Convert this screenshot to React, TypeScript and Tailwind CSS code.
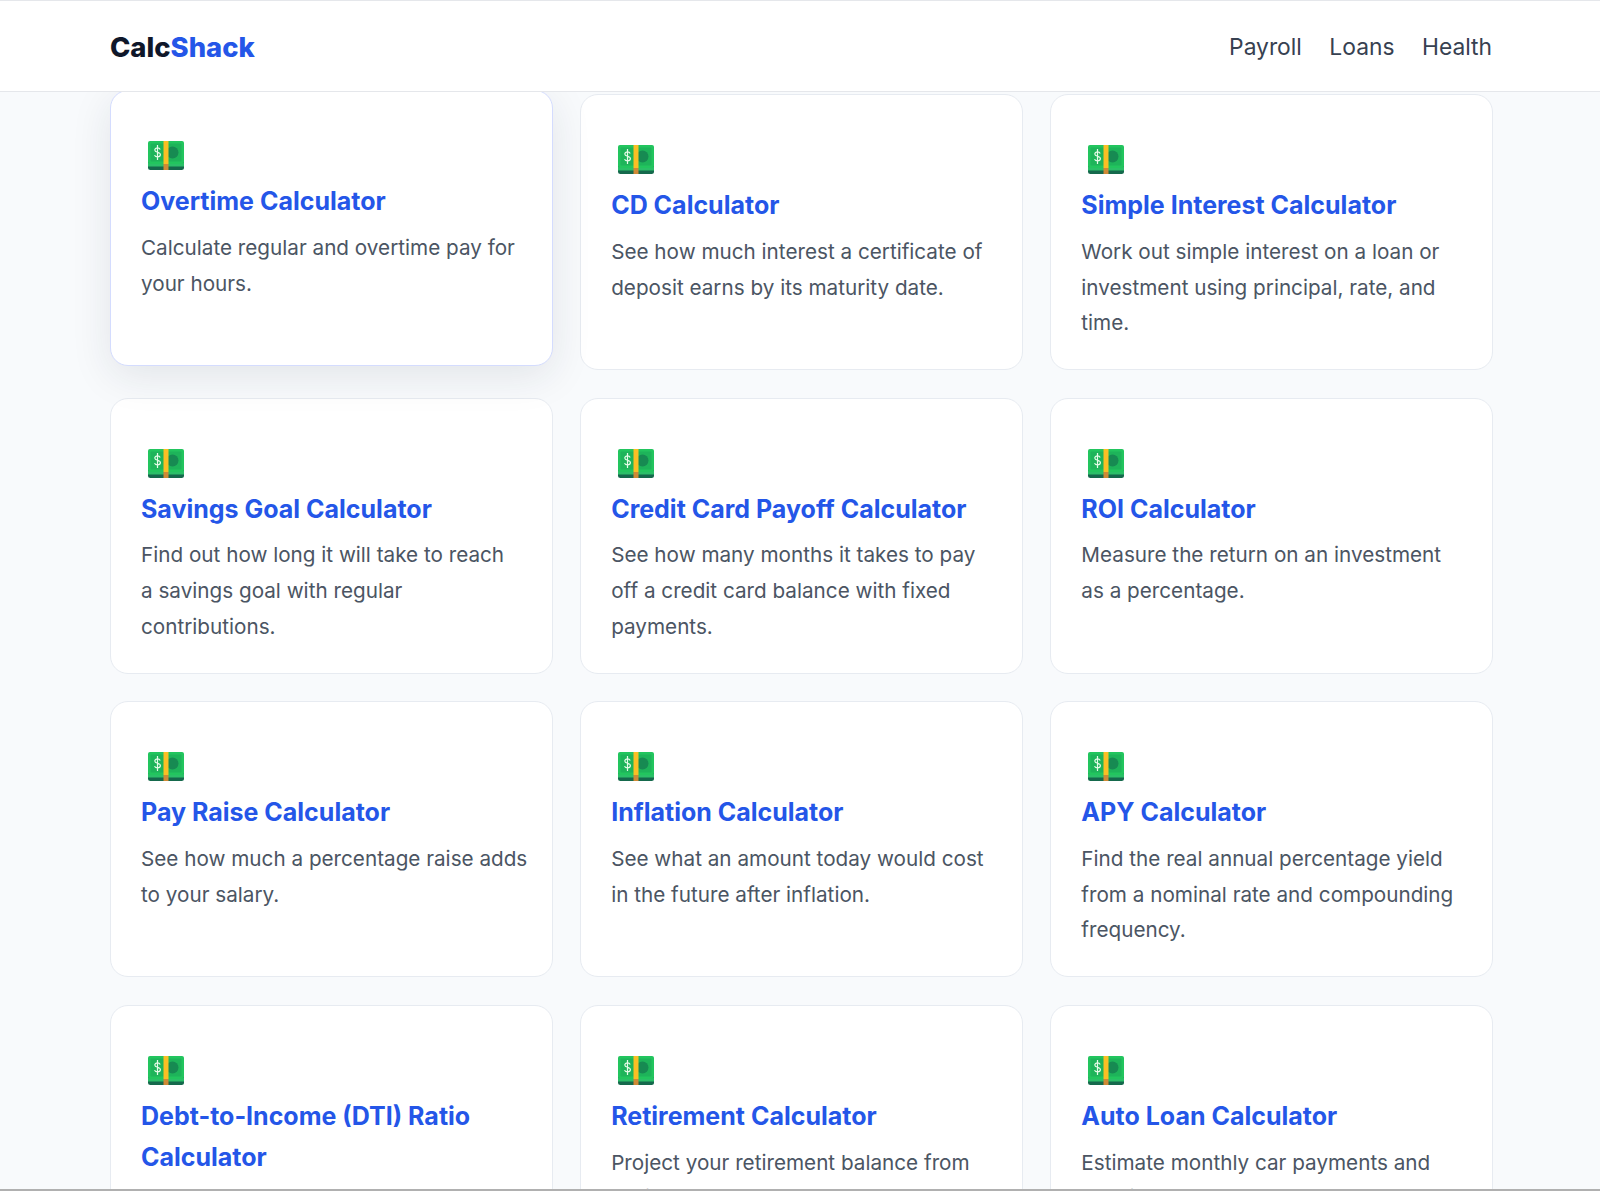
const calculators = [
  { title: "Overtime Calculator", text: "Calculate regular and overtime pay for your hours." },
  { title: "CD Calculator", text: "See how much interest a certificate of deposit earns by its maturity date." },
  { title: "Simple Interest Calculator", text: "Work out simple interest on a loan or investment using principal, rate, and time." },
  { title: "Savings Goal Calculator", text: "Find out how long it will take to reach\na savings goal with regular contributions." },
  { title: "Credit Card Payoff Calculator", text: "See how many months it takes to pay\noff a credit card balance with fixed payments." },
  { title: "ROI Calculator", text: "Measure the return on an investment\nas a percentage." },
  { title: "Pay Raise Calculator", text: "See how much a percentage raise adds to your salary." },
  { title: "Inflation Calculator", text: "See what an amount today would cost in the future after inflation." },
  { title: "APY Calculator", text: "Find the real annual percentage yield from a nominal rate and compounding frequency." },
  { title: "Debt-to-Income (DTI) Ratio Calculator", text: "See how much of your income goes to debt payments each month." },
  { title: "Retirement Calculator", text: "Project your retirement balance from savings and growth." },
  { title: "Auto Loan Calculator", text: "Estimate monthly car payments and total interest." },
]

function MoneyIcon() {
  return (
    <svg width="36" height="29" viewBox="0 0 36 29" className="ml-[7px]">
      <rect x="0" y="4" width="36" height="25" rx="2.5" fill="#15694c" />
      <rect x="0" y="22" width="36" height="3.5" fill="#2bbf68" />
      <rect x="0" y="0" width="36" height="23" rx="2" fill="#22c55e" />
      <rect x="2.5" y="2.5" width="31" height="18" rx="1" fill="#1eb45a" />
      <circle cx="24.5" cy="11.5" r="6" fill="#178a52" />
      <path d="M9.5 4v15M12.2 8.4c-.5-1.1-1.5-1.6-2.7-1.6-1.5 0-2.7.8-2.7 2.2 0 2.9 5.6 1.6 5.6 4.6 0 1.4-1.2 2.3-2.9 2.3-1.3 0-2.4-.6-3-1.6" fill="none" stroke="#e7fbe9" strokeWidth="1.2" />
      <rect x="15.5" y="0" width="5" height="23" fill="#fbbf24" />
      <rect x="15.5" y="23" width="5" height="6" fill="#d08a35" />
    </svg>
  )
}

function Card({ title, text, hovered }: { title: string; text: string; hovered: boolean }) {
  return (
    <a
      href="#"
      className={
        hovered
          ? "block -translate-y-[4px] rounded-[18px] border border-[#d4dcfe] bg-white pt-[30px] pr-[20px] pb-[28.2px] pl-[30px] shadow-[0_10px_40px_rgba(30,41,59,0.1)]"
          : "block rounded-[18px] border border-[#e7ebf1] bg-white pt-[30px] pr-[20px] pb-[28.2px] pl-[30px]"
      }
    >
      <div className="h-[60px] pt-[20px]">
        <MoneyIcon />
      </div>
      <h3 className="mb-[8px] text-[25px] leading-[40.8px] font-bold text-[#2456e8]">{title}</h3>
      <p className="text-[20.7px] leading-[35.7px] whitespace-pre-line text-[#4b5563]">{text}</p>
    </a>
  )
}

export default function App() {
  return (
    <div className="flex h-[1191px] flex-col overflow-hidden bg-[#f8fafc] font-['Inter',sans-serif]">
      <header className="relative z-10 h-[92px] shrink-0 border-y border-[#e5e7eb] bg-white">
        <div className="mr-[108px] ml-[110px] flex h-full items-center justify-between pt-[3px]">
          <div className="text-[27.4px] font-extrabold text-[#0f172a]">
            Calc<span className="text-[#2456e8]">Shack</span>
          </div>
          <nav className="flex gap-[27.5px] text-[22.8px] text-[#374151]">
            <a href="#">Payroll</a>
            <a href="#">Loans</a>
            <a href="#">Health</a>
          </nav>
        </div>
      </header>
      <main className="mr-[107px] ml-[110px] grid min-h-0 flex-1 grid-cols-3 gap-x-[27.5px] gap-y-[27.5px] overflow-visible pt-[2px]">
        {calculators.map((c, i) => (
          <Card key={c.title} title={c.title} text={c.text} hovered={i === 0} />
        ))}
      </main>
      <div className="relative z-10 h-[2px] shrink-0 bg-[#b0b0b0]" />
    </div>
  )
}
